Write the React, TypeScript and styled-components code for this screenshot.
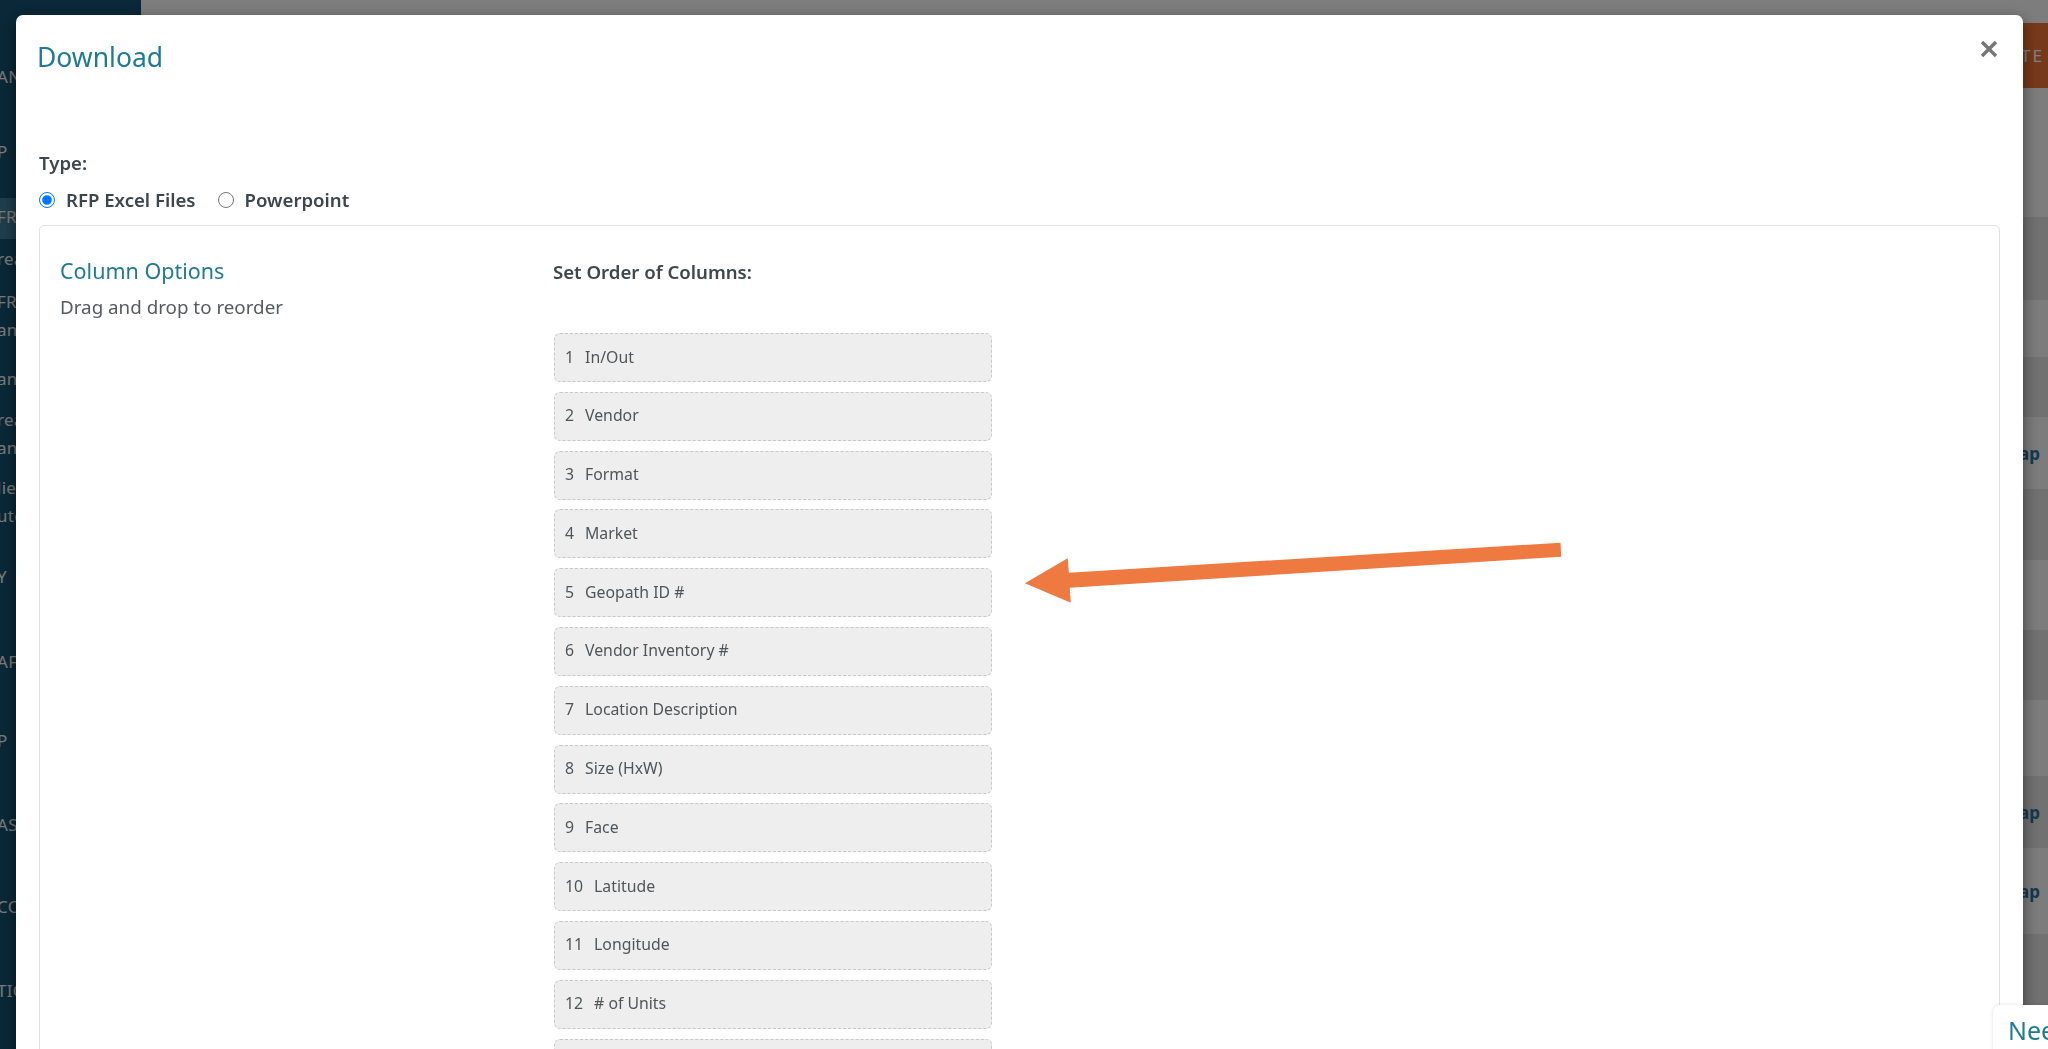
import React from "react";
import styled, { createGlobalStyle } from "styled-components";

const GlobalStyle = createGlobalStyle`
  html, body {
    margin: 0;
    padding: 0;
    height: 100%;
    overflow: hidden;
    font-family: "Noto Sans", "Open Sans", Arial, sans-serif;
    background: #f4f4f4;
  }
  * { box-sizing: border-box; }
`;

/* ---------- underlying app page ---------- */

const Page = styled.div`
  display: flex;
  height: 100vh;
  width: 100vw;
`;

const Sidebar = styled.nav`
  width: 141px;
  flex: none;
  background: #145070;
  overflow: hidden;
  display: flex;
  flex-direction: column;
`;

const NavItem = styled.div<{ $mt: number; $active?: boolean }>`
  margin-top: ${(p) => p.$mt}px;
  margin-left: -3px;
  padding: ${(p) => (p.$active ? "5px 0 8px" : "0")};
  background: ${(p) => (p.$active ? "#3f7b9a" : "transparent")};
  color: #f2f4f5;
  font-size: 17px;
  line-height: 28px;
  white-space: pre-line;
  letter-spacing: 0.3px;
`;

const Main = styled.main`
  flex: 1;
  display: flex;
  flex-direction: column;
  background: #fbfbfb;
  overflow: hidden;
`;

const TopBar = styled.header`
  height: 217px;
  display: flex;
  justify-content: flex-end;
  align-items: flex-start;
  padding-top: 23px;
  background: #fafafa;
`;

const CreateButton = styled.button`
  height: 65px;
  margin-right: -60px;
  padding: 0 22px;
  border: none;
  border-radius: 4px;
  background: #ee7336;
  color: #ffffff;
  font-family: inherit;
  font-size: 17px;
  letter-spacing: 2px;
  white-space: nowrap;
`;

const TableRow = styled.div<{ $h: number; $shade: boolean }>`
  height: ${(p) => p.$h}px;
  display: flex;
  justify-content: flex-end;
  align-items: center;
  padding-right: 8px;
  background: ${(p) => (p.$shade ? "#e2e2e2" : "#f8f8f8")};
`;

const MapLink = styled.span`
  color: #2a729e;
  font-weight: 700;
  font-size: 17px;
`;

const Backdrop = styled.div`
  position: fixed;
  inset: 0;
  background: rgba(0, 0, 0, 0.5);
  z-index: 5;
`;

/* ---------- download modal ---------- */

const Modal = styled.section`
  position: fixed;
  top: 15px;
  left: 16px;
  width: 2007px;
  bottom: -60px;
  background: #ffffff;
  border-radius: 7px;
  box-shadow: 0 5px 15px rgba(0, 0, 0, 0.5);
  z-index: 10;
  display: flex;
  flex-direction: column;
`;

const ModalHeader = styled.div`
  display: flex;
  justify-content: space-between;
  align-items: flex-start;
  padding: 25px 25px 0 21px;
  height: 57px;
`;

const Title = styled.h4`
  margin: 3px 0 0;
  font-size: 26.5px;
  line-height: 29px;
  font-weight: 400;
  color: #1e7b92;
`;

const CloseButton = styled.button`
  width: 18px;
  height: 18px;
  padding: 0;
  border: none;
  background: none;
  display: flex;
  cursor: pointer;
`;

const ModalBody = styled.div`
  padding: 78px 23px 0;
  display: flex;
  flex-direction: column;
`;

const FieldLabel = styled.div`
  font-size: 18.6px;
  line-height: 25px;
  font-weight: 600;
  color: #3d464d;
`;

const RadioRow = styled.div`
  display: flex;
  align-items: center;
  margin-top: 12px;
  gap: 22px;
`;

const RadioOption = styled.label`
  display: flex;
  align-items: center;
  gap: 11px;
  font-size: 18.6px;
  line-height: 25px;
  font-weight: 600;
  color: #3d464d;

  input {
    width: 16px;
    height: 16px;
    margin: 0;
  }
`;

const Card = styled.div`
  margin-top: 13px;
  border: 1px solid #e2e2e2;
  border-radius: 5px;
  padding: 32px 20px 0;
  display: grid;
  grid-template-columns: 493px 1fr;
  min-height: 900px;
`;

const SideInfo = styled.div`
  display: flex;
  flex-direction: column;
  gap: 10px;
`;

const SectionTitle = styled.h5`
  margin: 0;
  font-size: 21.5px;
  line-height: 26px;
  font-weight: 400;
  color: #1e7b92;
`;

const Hint = styled.p`
  margin: 0;
  font-size: 18.8px;
  line-height: 26px;
  color: #555b60;
`;

const OrderColumn = styled.div`
  display: flex;
  flex-direction: column;
`;

const OrderLabel = styled.div`
  font-size: 18.6px;
  line-height: 25px;
  font-weight: 600;
  color: #3f474c;
  margin-top: 1px;
`;

const ColumnList = styled.ol`
  list-style: none;
  margin: 49px 0 0 1px;
  padding: 0;
  width: 438px;
  display: flex;
  flex-direction: column;
  gap: 9.8px;
`;

const ColumnItem = styled.li`
  height: 49px;
  display: flex;
  align-items: center;
  gap: 11px;
  padding: 0 10px 2px;
  background: #eeeeee;
  border: 1px dashed #c8c8c8;
  border-radius: 6px;
  font-size: 15.8px;
  color: #4f5558;
  cursor: move;
`;

/* ---------- overlays on top of the modal ---------- */

const Annotation = styled.svg`
  position: fixed;
  inset: 0;
  z-index: 20;
  pointer-events: none;
`;

const HelpWidget = styled.div`
  position: fixed;
  left: 1993px;
  top: 1005px;
  width: 220px;
  height: 80px;
  padding: 8px 15px;
  background: #ffffff;
  border-radius: 7px 0 0 0;
  box-shadow: 0 0 4px rgba(0, 0, 0, 0.12);
  z-index: 30;
  color: #1e7b92;
  font-size: 25px;
  line-height: 34px;
  white-space: nowrap;
`;

const navItems: { text: string; mt: number; active?: boolean }[] = [
  { text: "ANNING", mt: 63 },
  { text: "P", mt: 47 },
  { text: "FRPs", mt: 32, active: true },
  { text: "reate", mt: 6 },
  { text: "FRP\nand", mt: 15 },
  { text: "and", mt: 21 },
  { text: "reate\nand", mt: 13 },
  { text: "lients\nutomation", mt: 12 },
  { text: "Y", mt: 33 },
  { text: "AFT", mt: 57 },
  { text: "P", mt: 51 },
  { text: "ASE", mt: 56 },
  { text: "CON", mt: 54 },
  { text: "TIO", mt: 56 },
];

const tableRows: { h: number; map?: boolean }[] = [
  { h: 83 },
  { h: 57 },
  { h: 60 },
  { h: 72, map: true },
  { h: 71 },
  { h: 70 },
  { h: 70 },
  { h: 76 },
  { h: 72, map: true },
  { h: 86, map: true },
  { h: 115 },
];

const columns = [
  "In/Out",
  "Vendor",
  "Format",
  "Market",
  "Geopath ID #",
  "Vendor Inventory #",
  "Location Description",
  "Size (HxW)",
  "Face",
  "Latitude",
  "Longitude",
  "# of Units",
  "Illuminated",
];

export default function App() {
  return (
    <>
      <GlobalStyle />
      <Page>
        <Sidebar>
          {navItems.map((n, i) => (
            <NavItem key={i} $mt={n.mt} $active={n.active}>
              {n.text}
            </NavItem>
          ))}
        </Sidebar>
        <Main>
          <TopBar>
            <CreateButton>CREATE RFP</CreateButton>
          </TopBar>
          {tableRows.map((r, i) => (
            <TableRow key={i} $h={r.h} $shade={i % 2 === 0}>
              {r.map && <MapLink>Map</MapLink>}
            </TableRow>
          ))}
        </Main>
      </Page>
      <Backdrop />

      <Modal role="dialog" aria-label="Download">
        <ModalHeader>
          <Title>Download</Title>
          <CloseButton aria-label="Close">
            <svg width="18" height="18" viewBox="0 0 18 18">
              <path
                d="M2 2 L16 16 M16 2 L2 16"
                stroke="#767676"
                strokeWidth="3.4"
                strokeLinecap="butt"
              />
            </svg>
          </CloseButton>
        </ModalHeader>
        <ModalBody>
          <FieldLabel>Type:</FieldLabel>
          <RadioRow>
            <RadioOption>
              <input type="radio" name="type" defaultChecked />
              RFP Excel Files
            </RadioOption>
            <RadioOption>
              <input type="radio" name="type" />
              Powerpoint
            </RadioOption>
          </RadioRow>
          <Card>
            <SideInfo>
              <SectionTitle>Column Options</SectionTitle>
              <Hint>Drag and drop to reorder</Hint>
            </SideInfo>
            <OrderColumn>
              <OrderLabel>Set Order of Columns:</OrderLabel>
              <ColumnList>
                {columns.map((c, i) => (
                  <ColumnItem key={c}>
                    <span>{i + 1}</span>
                    <span>{c}</span>
                  </ColumnItem>
                ))}
              </ColumnList>
            </OrderColumn>
          </Card>
        </ModalBody>
      </Modal>

      <Annotation width="2048" height="1049" viewBox="0 0 2048 1049">
        <polygon
          points="1560.5,542.7 1068.9,572.7 1067.7,558.3 1024.9,583.3 1070.8,602.7 1069.7,587.7 1561.2,556.7"
          fill="#ef7a41"
        />
      </Annotation>

      <HelpWidget>Need help?</HelpWidget>
    </>
  );
}
